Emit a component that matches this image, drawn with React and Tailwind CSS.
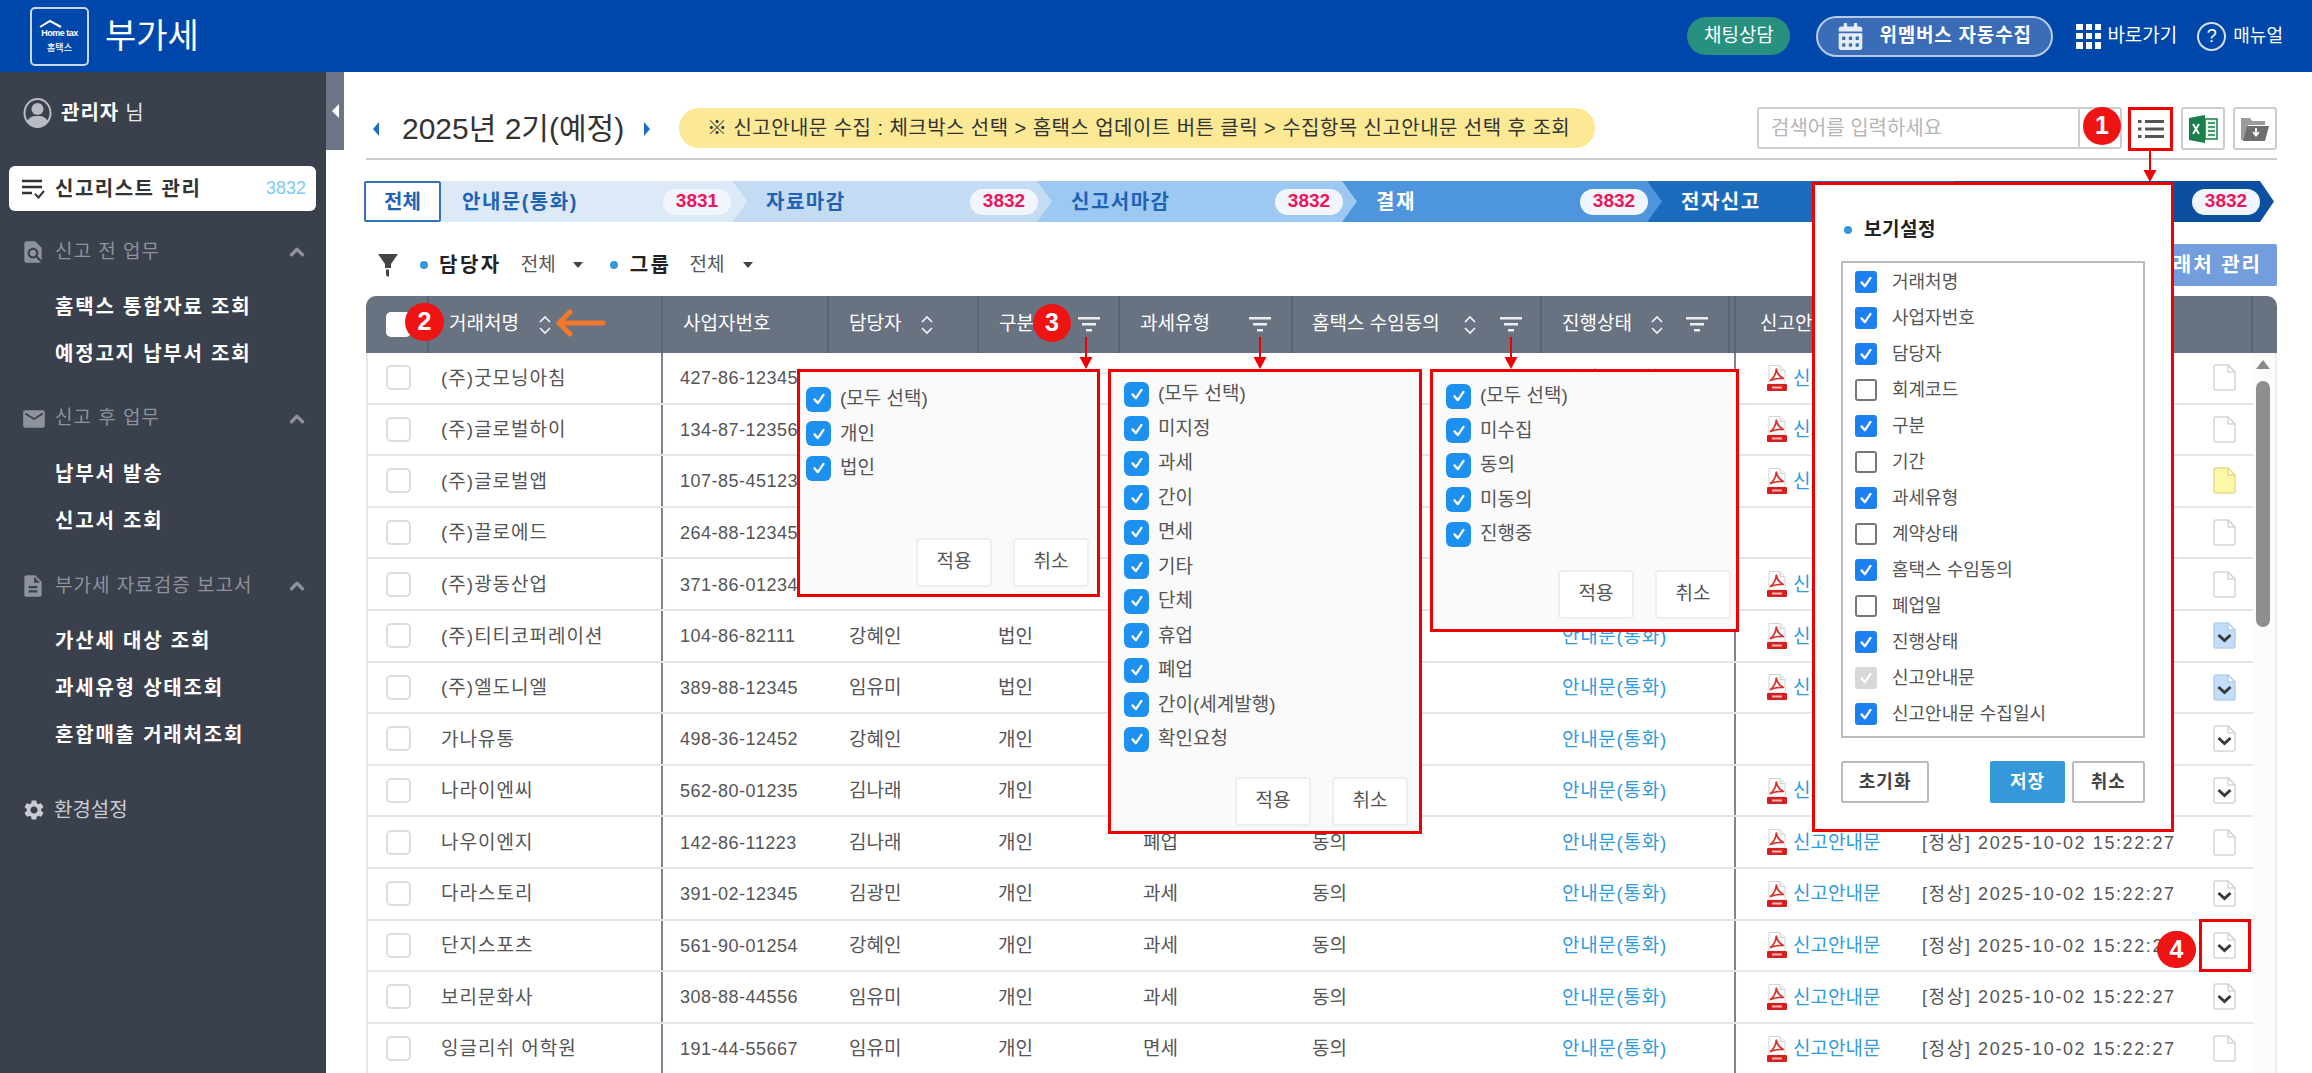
import React from "react";
import { ChevronUp } from "lucide-react";
import { MdMail, MdDescription, MdFindInPage, MdSettings } from "react-icons/md";
import { FaCalendarAlt } from "react-icons/fa";

const rows = [
  { name: "(주)굿모닝아침", biz: "427-86-12345", pdf: true, doc: "plain", link: true },
  { name: "(주)글로벌하이", biz: "134-87-12356", pdf: true, doc: "plain" },
  { name: "(주)글로벌앱", biz: "107-85-45123", pdf: true, doc: "yellow" },
  { name: "(주)끌로에드", biz: "264-88-12345", pdf: false, doc: "plain" },
  { name: "(주)광동산업", biz: "371-86-01234", pdf: true, doc: "plain" },
  { name: "(주)티티코퍼레이션", biz: "104-86-82111", mgr: "강혜인", kind: "법인", pdf: true, doc: "blue", link: true },
  { name: "(주)엘도니엘", biz: "389-88-12345", mgr: "임유미", kind: "법인", pdf: true, doc: "blue", link: true },
  { name: "가나유통", biz: "498-36-12452", mgr: "강혜인", kind: "개인", pdf: false, doc: "check", link: true },
  { name: "나라이엔씨", biz: "562-80-01235", mgr: "김나래", kind: "개인", pdf: true, doc: "check", link: true },
  { name: "나우이엔지", biz: "142-86-11223", mgr: "김나래", kind: "개인", tax: "폐업", ok: "동의", pdf: true, doc: "plain", link: true, date: true },
  { name: "다라스토리", biz: "391-02-12345", mgr: "김광민", kind: "개인", tax: "과세", ok: "동의", pdf: true, doc: "check", link: true, date: true },
  { name: "단지스포츠", biz: "561-90-01254", mgr: "강혜인", kind: "개인", tax: "과세", ok: "동의", pdf: true, doc: "check", link: true, date: true },
  { name: "보리문화사", biz: "308-88-44556", mgr: "임유미", kind: "개인", tax: "과세", ok: "동의", pdf: true, doc: "check", link: true, date: true },
  { name: "잉글리쉬 어학원", biz: "191-44-55667", mgr: "임유미", kind: "개인", tax: "면세", ok: "동의", pdf: true, doc: "plain", link: true, date: true },
];

const viewItems = [
  ["거래처명", "on"], ["사업자번호", "on"], ["담당자", "on"], ["회계코드", "off"], ["구분", "on"], ["기간", "off"],
  ["과세유형", "on"], ["계약상태", "off"], ["홈택스 수임동의", "on"], ["폐업일", "off"], ["진행상태", "on"],
  ["신고안내문", "dis"], ["신고안내문 수집일시", "on"],
];

const Check = ({ className = "" }) => (
  <svg viewBox="0 0 24 24" className={className} fill="none" stroke="#fff" strokeWidth="3" strokeLinecap="round" strokeLinejoin="round">
    <path d="M6 12.5l4.5 5L18 6.5" />
  </svg>
);

const Sort = () => (
  <svg width="14" height="20" viewBox="0 0 14 20" fill="none" stroke="#f2f2f2" strokeWidth="1.700" className="shrink-0">
    <path d="M2 7l5-5 5 5M2 13l5 5 5-5" />
  </svg>
);

const FilterBars = () => (
  <svg width="22" height="17" viewBox="0 0 22 17" fill="#eeeeee" className="shrink-0">
    <rect x="0" y="1" width="22" height="2.500" />
    <rect x="4" y="7" width="14" height="2.500" />
    <rect x="8" y="13" width="6" height="2.500" />
  </svg>
);

const PdfIcon = () => (
  <svg width="20" height="26" viewBox="0 0 20 26" className="shrink-0">
    <path d="M2 .5h11l5 5V19H2z" fill="#fff" stroke="#d4d4d4" />
    <path d="M13 .5v5h5" fill="#eeeeee" stroke="#d4d4d4" />
    <path d="M3.500 15.500C6.500 13 9 8 9.300 4c.8 4.500 3 7.500 7 9.500-4-.3-8.500.3-12.800 2z" fill="none" stroke="#d8322a" strokeWidth="1.700" strokeLinejoin="round" />
    <rect x="0" y="19" width="20" height="7" rx="1" fill="#d3201f" />
    <rect x="5" y="21.500" width="10" height="2" fill="#f3b4b4" />
  </svg>
);

const DocIcon = ({ kind }) => {
  const fill = kind === "yellow" ? "#fdf7a8" : kind === "blue" ? "#c3dcf8" : "#fff";
  const stroke = kind === "yellow" ? "#e4dc88" : kind === "blue" ? "#b6cfea" : "#d6d6d6";
  return (
    <svg width="23" height="27" viewBox="0 0 23 27" className="shrink-0">
      <path d="M3 1h12l7 7v16a2 2 0 0 1-2 2H3a2 2 0 0 1-2-2V3a2 2 0 0 1 2-2z" fill={fill} stroke={stroke} strokeWidth="1.500" />
      <path d="M15 1v7h7z" fill="#fff" stroke={stroke} strokeWidth="1.500" strokeLinejoin="round" />
      {(kind === "check" || kind === "blue") && <path d="M5.500 13l6 5.500 6-5.500" fill="none" stroke="#3a3a3a" strokeWidth="3" />}
    </svg>
  );
};

const Badge = ({ n, className }) => (
  <div className={"absolute z-40 flex items-center justify-center rounded-full bg-[#ee1414] text-white font-bold text-[25px] " + className}>{n}</div>
);

const DownArrow = ({ className }) => (
  <svg width="14" height="32" viewBox="0 0 14 32" className={"absolute z-40 " + className}>
    <path d="M6 0h2v21H6z" fill="#f00000" />
    <path d="M0.500 20h13L7 32z" fill="#f00000" />
  </svg>
);

const StepPill = ({ children }) => (
  <span className="ml-auto flex h-[26px] w-[68px] items-center justify-center rounded-full bg-[#f1f6fc] text-[19px] font-bold tracking-normal text-[#f0145a]">{children}</span>
);

const FilterPopup = ({ items, className, pad, btnPad }) => (
  <div className={"absolute z-30 flex flex-col border-[3px] border-[#f00000] bg-[#fafafa] " + className}>
    <div className={pad}>
      {items.map((t) => (
        <div key={t} className="flex h-[34.5px] items-center gap-[9px]">
          <span className="flex h-[25px] w-[25px] items-center justify-center rounded-[6px] bg-[#1e90f0]"><Check className="h-[18px] w-[18px]" /></span>
          <span className="text-[19px] text-[#555]">{t}</span>
        </div>
      ))}
    </div>
    <div className={"mt-auto flex justify-end gap-[21px] " + btnPad}>
      {["적용", "취소"].map((t) => (
        <span key={t} className="flex h-[49px] w-[76px] items-center justify-center rounded-[4px] border-2 border-[#eeeeee] bg-white text-[19px] text-[#555]">{t}</span>
      ))}
    </div>
  </div>
);

const SideItem = ({ children }) => (
  <div className="ml-[55px] flex h-[47px] items-center text-[20px] font-bold tracking-[1.800px] text-white">{children}</div>
);

const SideGroup = ({ icon, title, mt }) => (
  <div className={"ml-[23px] mr-[18px] flex h-[24px] items-center text-[#8d929b] " + mt}>
    <span className="flex w-[32px] items-center">{icon}</span>
    <span className="text-[19px] tracking-[1px]">{title}</span>
    <ChevronUp className="ml-auto" size={22} strokeWidth={3.5} />
  </div>
);

const IconBox = ({ children }) => (
  <div className="flex h-[43px] w-[44px] items-center justify-center rounded-[3px] border-2 border-[#cccccc] bg-white">{children}</div>
);

const Step = ({ children, className }) => (
  <div className={"flex items-center text-[20px] font-bold tracking-[1.500px] " + className}>{children}</div>
);

export default function App() {
  return (
    <div className="relative flex h-[1073px] w-[2312px] flex-col overflow-hidden bg-white font-['Liberation_Sans','Noto_Sans_CJK_KR',sans-serif] text-[#555]">
      {/* top bar */}
      <header className="flex h-[72px] shrink-0 items-center bg-[#0047ab] pl-[30px] pr-[29px] text-white">
        <div className="flex h-[59px] w-[59px] flex-col items-center justify-center rounded-[5px] border-2 border-[#c9d8ee]">
          <svg width="30" height="9" viewBox="0 0 30 9" fill="none" stroke="#fff" strokeWidth="2" className="-ml-[12px]"><path d="M1 8L11 2l11 6" /></svg>
          <span className="text-[9px] font-bold leading-[10px] tracking-[-0.5px]">Home tax</span>
          <span className="mt-[5px] text-[9px] font-bold leading-[10px] text-[#dbe5f3]">홈택스</span>
        </div>
        <span className="ml-[16px] text-[34px] leading-none">부가세</span>
        <div className="ml-auto flex h-[38px] w-[103px] items-center justify-center rounded-full bg-[#27907f] text-[19px]">채팅상담</div>
        <div className="ml-[26px] flex h-[41px] w-[237px] items-center rounded-full border-2 border-[#b8cbe6] bg-[#3a6cb8] pl-[19px]">
          <FaCalendarAlt size={27} className="text-[#e6edf6]" />
          <span className="ml-[15px] text-[19px] font-bold tracking-[0.8px]">위멤버스 자동수집</span>
        </div>
        <div className="ml-[23px] grid h-[25px] w-[25px] grid-cols-3 gap-[3px]">
          {[0, 1, 2, 3, 4, 5, 6, 7, 8].map((i) => <span key={i} className="bg-white" />)}
        </div>
        <span className="ml-[6px] text-[19px]">바로가기</span>
        <span className="ml-[20px] flex h-[29px] w-[29px] items-center justify-center rounded-full border-2 border-[#d5dfee] text-[18px]">?</span>
        <span className="ml-[7px] text-[18px]">매뉴얼</span>
      </header>

      <div className="flex min-h-0 flex-1">
        {/* sidebar */}
        <aside className="flex w-[326px] shrink-0 flex-col bg-[#3b404d]">
          <div className="mt-[25px] flex h-[28px] items-center pl-[23px] pt-[3px] text-[20px] text-[#e8e8e8]">
            <svg width="29" height="30" viewBox="0 0 29 30" className="mr-[9px]">
              <ellipse cx="14.500" cy="15" rx="13" ry="14" fill="#3b404d" stroke="#b9bcc2" strokeWidth="2" />
              <circle cx="14.500" cy="11" r="6" fill="#b9bcc2" />
              <path d="M4 24c2-5 5-6 10.500-6S23 19 25 24c-3 4-7 4.500-10.500 4.500S7 28 4 24z" fill="#b9bcc2" />
            </svg>
            <span className="font-bold tracking-[1px] text-white">관리자</span><span className="ml-[6px]">님</span>
          </div>
          <div className="ml-[9px] mt-[41px] flex h-[45px] w-[307px] items-center rounded-[6px] bg-white pl-[13px] pr-[10px] text-[#333]">
            <svg width="24" height="20" viewBox="0 0 24 20" fill="none" stroke="#333" strokeWidth="2.500" className="mr-[9px]">
              <path d="M0 2h20M0 8h20M0 14h10" /><path d="M13 15l3.500 3.500L22 12" strokeWidth="2" />
            </svg>
            <span className="text-[20px] font-bold tracking-[1.500px]">신고리스트 관리</span>
            <span className="ml-auto text-[18px] text-[#7cc9f5]">3832</span>
          </div>
          <SideGroup mt="mt-[29px]" title="신고 전 업무" icon={<MdFindInPage size={26} className="-ml-[3px]" />} />
          <div className="mt-[19.500px]"><SideItem>홈택스 통합자료 조회</SideItem><SideItem>예정고지 납부서 조회</SideItem></div>
          <SideGroup mt="mt-[29px]" title="신고 후 업무" icon={<MdMail size={26} className="-ml-[2px]" />} />
          <div className="mt-[19.500px]"><SideItem>납부서 발송</SideItem><SideItem>신고서 조회</SideItem></div>
          <SideGroup mt="mt-[30px]" title="부가세 자료검증 보고서" icon={<MdDescription size={26} className="-ml-[3px]" />} />
          <div className="mt-[19.500px]"><SideItem>가산세 대상 조회</SideItem><SideItem>과세유형 상태조회</SideItem><SideItem>혼합매출 거래처조회</SideItem></div>
          <div className="ml-[22px] mt-[37px] flex h-[28px] items-center text-[20px] text-[#c9ccd2]">
            <MdSettings size={24} className="mr-[8px]" />환경설정
          </div>
        </aside>

        {/* collapse handle */}
        <div className="flex h-[78px] w-[18px] shrink-0 items-center justify-center bg-[#6b7586]">
          <span className="h-0 w-0 border-y-[7px] border-r-[7px] border-y-transparent border-r-white" />
        </div>

        {/* main */}
        <main className="ml-[22px] flex w-[1911px] shrink-0 flex-col">
          {/* title row */}
          <div className="mt-[35px] flex h-[53px] items-start border-b-2 border-[#cccccc] pb-[8px]">
            <div className="flex h-[43px] w-[313px] items-center">
              <span className="ml-[7px] h-0 w-0 border-y-[7px] border-r-[6px] border-y-transparent border-r-[#1b6dc1]" />
              <span className="ml-[23px] text-[30px] leading-none text-[#333]">2025년 2기(예정)</span>
              <span className="ml-[20px] h-0 w-0 border-y-[7px] border-l-[6px] border-y-transparent border-l-[#1b6dc1]" />
            </div>
            <div className="mt-[1px] flex h-[40px] w-[916px] items-center rounded-full bg-[#fbe996] pl-[28px] text-[20px] tracking-[0.450px] text-[#333]">
              ※ 신고안내문 수집 : 체크박스 선택 &gt; 홈택스 업데이트 버튼 클릭 &gt; 수집항목 신고안내문 선택 후 조회
            </div>
            <div className="ml-[162px] flex h-[42px] w-[365px] items-center rounded-[3px] border-2 border-[#cccccc] bg-white pl-[12px] text-[20px] text-[#b5b5b5]">
              <span className="flex-1">검색어를 입력하세요</span>
              <span className="h-full w-[42px] border-l-2 border-[#cccccc]" />
            </div>
            <div className="ml-[7px] flex gap-[8px]">
              <IconBox>
                <svg width="26" height="20" viewBox="0 0 26 20" fill="#555"><rect x="0" y="1" width="3.500" height="3" /><rect x="7" y="1" width="19" height="3" /><rect x="0" y="8.500" width="3.500" height="3" /><rect x="7" y="8.500" width="19" height="3" /><rect x="0" y="16" width="3.500" height="3" /><rect x="7" y="16" width="19" height="3" /></svg>
              </IconBox>
              <IconBox>
                <svg width="30" height="28" viewBox="0 0 30 28">
                  <path d="M1 3l16-3v28L1 25z" fill="#1a7f4b" />
                  <path d="M17 4h12v20H17z" fill="#e9f5ee" stroke="#1a7f4b" strokeWidth="1.500" />
                  <path d="M20 8h7M20 12h7M20 16h7M20 20h7" stroke="#1a7f4b" strokeWidth="1.500" />
                  <path d="M5 9l6 10M11 9L5 19" stroke="#fff" strokeWidth="2" />
                </svg>
              </IconBox>
              <IconBox>
                <svg width="30" height="26" viewBox="0 0 30 26">
                  <path d="M1 2h9l2 3h13v4H8L4 24H1z" fill="#9b9b9b" />
                  <path d="M7 10h22l-4 15H3z" fill="#6e6e6e" />
                  <path d="M16 12v7M13 16l3 3.500 3-3.500" stroke="#fff" strokeWidth="1.800" fill="none" />
                </svg>
              </IconBox>
            </div>
          </div>

          {/* steps */}
          <div className="mt-[21px] flex h-[41px] items-stretch">
            <div className="-ml-[2px] flex w-[77px] items-center justify-center rounded-[2px] border-2 border-[#2f74b8] text-[20px] font-bold text-[#1f63b5]">전체</div>
            <Step className="w-[306px] bg-[#dce9f7] pl-[21px] pr-[16px] text-[#1f63b5] [clip-path:polygon(0_0,calc(100%-15px)_0,100%_50%,calc(100%-15px)_100%,0_100%)]">안내문(통화)<StepPill>3831</StepPill></Step>
            <Step className="-ml-[15px] w-[322px] bg-[#c3dbf3] pl-[34px] pr-[16px] text-[#1f63b5] [clip-path:polygon(0_0,calc(100%-17px)_0,100%_50%,calc(100%-17px)_100%,0_100%,15px_50%)]">자료마감<StepPill>3832</StepPill></Step>
            <Step className="-ml-[17px] w-[322px] bg-[#9cc8f1] pl-[34px] pr-[16px] text-[#1f63b5] [clip-path:polygon(0_0,calc(100%-17px)_0,100%_50%,calc(100%-17px)_100%,0_100%,15px_50%)]">신고서마감<StepPill>3832</StepPill></Step>
            <Step className="-ml-[17px] w-[322px] bg-[#4d96dd] pl-[34px] pr-[16px] text-white [clip-path:polygon(0_0,calc(100%-17px)_0,100%_50%,calc(100%-17px)_100%,0_100%,15px_50%)]">결재<StepPill>3832</StepPill></Step>
            <Step className="-ml-[17px] w-[322px] bg-[#1c6cbd] pl-[34px] pr-[16px] text-white [clip-path:polygon(0_0,calc(100%-17px)_0,100%_50%,calc(100%-17px)_100%,0_100%,15px_50%)]">전자신고<StepPill>3832</StepPill></Step>
            <Step className="-ml-[17px] w-[322px] bg-[#0a4fa0] pl-[34px] pr-[14px] text-white [clip-path:polygon(0_0,calc(100%-14px)_0,100%_50%,calc(100%-14px)_100%,0_100%,15px_50%)]"><StepPill>3832</StepPill></Step>
          </div>

          {/* filter row */}
          <div className="mt-[22px] flex h-[42px] items-center text-[19px]">
            <svg width="20" height="24" viewBox="0 0 20 24" className="ml-[12px]" fill="#444"><path d="M0 1h20l-7 10v4H7v-4z" /><path d="M8 16.500h3V24l-3-1.500z" /></svg>
            <span className="ml-[22px] h-[8px] w-[8px] rounded-full bg-[#3498db]" />
            <span className="ml-[11px] text-[20px] font-bold tracking-[2.500px] text-[#222]">담당자</span>
            <span className="ml-[19px] text-[#555]">전체</span>
            <span className="ml-[17px] h-0 w-0 border-x-[5px] border-t-[6px] border-x-transparent border-t-[#444]" />
            <span className="ml-[27px] h-[8px] w-[8px] rounded-full bg-[#3498db]" />
            <span className="ml-[12px] text-[20px] font-bold tracking-[2.500px] text-[#222]">그룹</span>
            <span className="ml-[18px] text-[#555]">전체</span>
            <span className="ml-[19px] h-0 w-0 border-x-[5px] border-t-[6px] border-x-transparent border-t-[#444]" />
            <div className="ml-auto flex h-[42px] w-[160px] items-center justify-end rounded-[2px] bg-[#739ddd] pr-[15px] text-[20px] font-bold tracking-[2px] text-white">거래처 관리</div>
          </div>

          {/* table */}
          <div className="mt-[10px] flex min-h-0 flex-1 flex-col">
            <div className="flex h-[57px] shrink-0 items-stretch rounded-t-[10px] bg-[#697280] text-[19px] text-white">
              <div className="flex w-[63px] items-center border-r-2 border-[#5a6371] pl-[20px]"><span className="h-[25px] w-[25px] rounded-[5px] bg-white" /></div>
              <div className="flex w-[234px] items-center border-r-2 border-[#5a6371] pl-[20px]"><span>거래처명</span><span className="ml-[19px]"><Sort /></span></div>
              <div className="flex w-[166px] items-center border-r-2 border-[#5a6371] pl-[20px]">사업자번호</div>
              <div className="flex w-[150px] items-center border-r-2 border-[#5a6371] pl-[20px]"><span>담당자</span><span className="ml-[19px]"><Sort /></span></div>
              <div className="flex w-[141px] items-center border-r-2 border-[#5a6371] pl-[20px]"><span>구분</span><span className="ml-[44px]"><FilterBars /></span></div>
              <div className="flex w-[173px] items-center border-r-2 border-[#5a6371] pl-[20px]"><span>과세유형</span><span className="ml-[39px]"><FilterBars /></span></div>
              <div className="flex w-[249px] items-center border-r-2 border-[#5a6371] pl-[19px]"><span>홈택스 수임동의</span><span className="ml-[23px]"><Sort /></span><span className="ml-[23px]"><FilterBars /></span></div>
              <div className="flex w-[188px] items-center border-r-2 border-[#5a6371] pl-[20px]"><span>진행상태</span><span className="ml-[18px]"><Sort /></span><span className="ml-[22px]"><FilterBars /></span></div>
              <div className="flex w-[6px] border-r-2 border-[#5a6371]" />
              <div className="flex w-[517px] items-center border-r-2 border-[#5a6371] pl-[24px]">신고안내문</div>
              <div className="flex-1" />
            </div>
            <div className="flex min-h-0 flex-1">
              <div className="w-[1887px] shrink-0 border-l-2 border-[#e8e8e8]">
                {rows.map((r) => (
                  <div key={r.name} className="flex h-[51.6px] items-center border-b-2 border-[#e6e6e6] text-[19px] text-[#555]">
                    <div className="flex h-full w-[61px] items-center pl-[18px]"><span className="h-[25px] w-[25px] rounded-[5px] border-2 border-[#dddddd] bg-white" /></div>
                    <div className="flex h-full w-[234px] items-center border-r-2 border-[#7b8494] pl-[12px] pt-[2px] tracking-[1px]">{r.name}</div>
                    <div className="flex h-full w-[166px] items-center pl-[17px] pt-[2px] text-[18px] tracking-[0.500px]">{r.biz}</div>
                    <div className="flex h-full w-[150px] items-center pl-[20px] pt-[2px]">{r.mgr}</div>
                    <div className="flex h-full w-[141px] items-center pl-[19px] pt-[2px]">{r.kind}</div>
                    <div className="flex h-full w-[173px] items-center pl-[23px] pt-[2px]">{r.tax}</div>
                    <div className="flex h-full w-[249px] items-center pl-[19px] pt-[2px]">{r.ok}</div>
                    <div className="flex h-full w-[194px] items-center border-r-2 border-[#7b8494] pl-[20px] pt-[2px] tracking-[0.700px] text-[#2f9be0]">{r.link ? "안내문(통화)" : ""}</div>
                    <div className="flex h-full w-[170px] items-center gap-[6px] pl-[31px] text-[#2f9be0]">
                      {r.pdf && <><PdfIcon /><span className="pt-[2px]">신고안내문</span></>}
                    </div>
                    <div className="flex h-full w-[293px] items-center pl-[16px] pt-[2px] text-[18px] tracking-[1.600px]">{r.date ? "[정상] 2025-10-02 15:22:27" : ""}</div>
                    <div className="flex w-[54px] justify-start pl-[14px]"><DocIcon kind={r.doc} /></div>
                  </div>
                ))}
              </div>
              <div className="flex w-[24px] shrink-0 flex-col items-center border-r-2 border-[#eeeeee] bg-[#fbfbfb] pr-[3px] pt-[7px]">
                <span className="h-0 w-0 border-x-[7px] border-b-[9px] border-x-transparent border-b-[#8a8a8a]" />
                <span className="mt-[12px] h-[246px] w-[14px] rounded-full bg-[#8e8e8e]" />
              </div>
            </div>
          </div>
        </main>
      </div>

      {/* overlays */}
      <FilterPopup className="left-[797px] top-[369px] h-[228px] w-[303px]" pad="pl-[6px] pt-[10px]" btnPad="pr-[8px] pb-[7px]" items={["(모두 선택)", "개인", "법인"]} />
      <FilterPopup className="left-[1108px] top-[369px] h-[465px] w-[314px]" pad="pl-[13px] pt-[5px]" btnPad="pr-[11px] pb-[5px]" items={["(모두 선택)", "미지정", "과세", "간이", "면세", "기타", "단체", "휴업", "폐업", "간이(세계발행)", "확인요청"]} />
      <FilterPopup className="left-[1430px] top-[369px] h-[263px] w-[309px]" pad="pl-[13px] pt-[7px]" btnPad="pr-[5px] pb-[10px]" items={["(모두 선택)", "미수집", "동의", "미동의", "진행중"]} />

      <div className="absolute left-[1812px] top-[182px] z-30 flex h-[650px] w-[362px] flex-col border-[3px] border-[#f00000] bg-white px-[26px]">
        <div className="mt-[33px] flex h-[24px] items-center">
          <span className="ml-[3px] h-[8px] w-[8px] rounded-full bg-[#3498db]" />
          <span className="ml-[12px] text-[19px] font-bold tracking-[0.500px] text-[#222]">보기설정</span>
        </div>
        <div className="mt-[19px] h-[477px] border-2 border-[#bbbbbb] pl-[12px] pt-[1px]">
          {viewItems.map(([t, s]) => (
            <div key={t} className="flex h-[36px] items-center gap-[15px]">
              {s === "on" && <span className="flex h-[22px] w-[22px] items-center justify-center rounded-[3px] bg-[#1e7ff0]"><Check className="h-[18px] w-[18px]" /></span>}
              {s === "off" && <span className="h-[22px] w-[22px] rounded-[3px] border-2 border-[#777777] bg-white" />}
              {s === "dis" && <span className="flex h-[22px] w-[22px] items-center justify-center rounded-[3px] bg-[#d8d8d8]"><Check className="h-[18px] w-[18px]" /></span>}
              <span className="text-[18px] text-[#555]">{t}</span>
            </div>
          ))}
        </div>
        <div className="mt-[23px] flex text-[18px] font-bold tracking-[1px]">
          <span className="flex h-[42px] w-[89px] items-center justify-center rounded-[2px] border-2 border-[#bbbbbb] text-[#444]">초기화</span>
          <span className="ml-[61px] flex h-[42px] w-[75px] items-center justify-center rounded-[2px] bg-[#3498db] text-white">저장</span>
          <span className="ml-[7px] flex h-[42px] w-[74px] items-center justify-center rounded-[2px] border-2 border-[#bbbbbb] text-[#444]">취소</span>
        </div>
      </div>

      {/* annotations */}
      <div className="absolute left-[2128px] top-[107px] z-40 h-[44px] w-[45px] border-[3px] border-[#f00000]" />
      <div className="absolute left-[2199px] top-[919px] z-40 h-[53px] w-[52px] border-[3px] border-[#f00000]" />
      <DownArrow className="left-[2143px] top-[150px]" />
      <DownArrow className="left-[1079px] top-[337px]" />
      <DownArrow className="left-[1253px] top-[337px]" />
      <DownArrow className="left-[1504px] top-[337px]" />
      <Badge n="1" className="left-[2083px] top-[107px] h-[38px] w-[38px]" />
      <Badge n="2" className="left-[405px] top-[303px] h-[38px] w-[39px]" />
      <Badge n="3" className="left-[1033px] top-[304px] h-[38px] w-[38px]" />
      <Badge n="4" className="left-[2157px] top-[931px] h-[37px] w-[39px]" />
      <svg width="50" height="28" viewBox="0 0 50 28" className="absolute left-[556px] top-[309px] z-40" fill="none" stroke="#f2792b" strokeWidth="5" strokeLinecap="round" strokeLinejoin="round">
        <path d="M14 3L3 14l11 11M3 14h44" />
      </svg>
    </div>
  );
}
